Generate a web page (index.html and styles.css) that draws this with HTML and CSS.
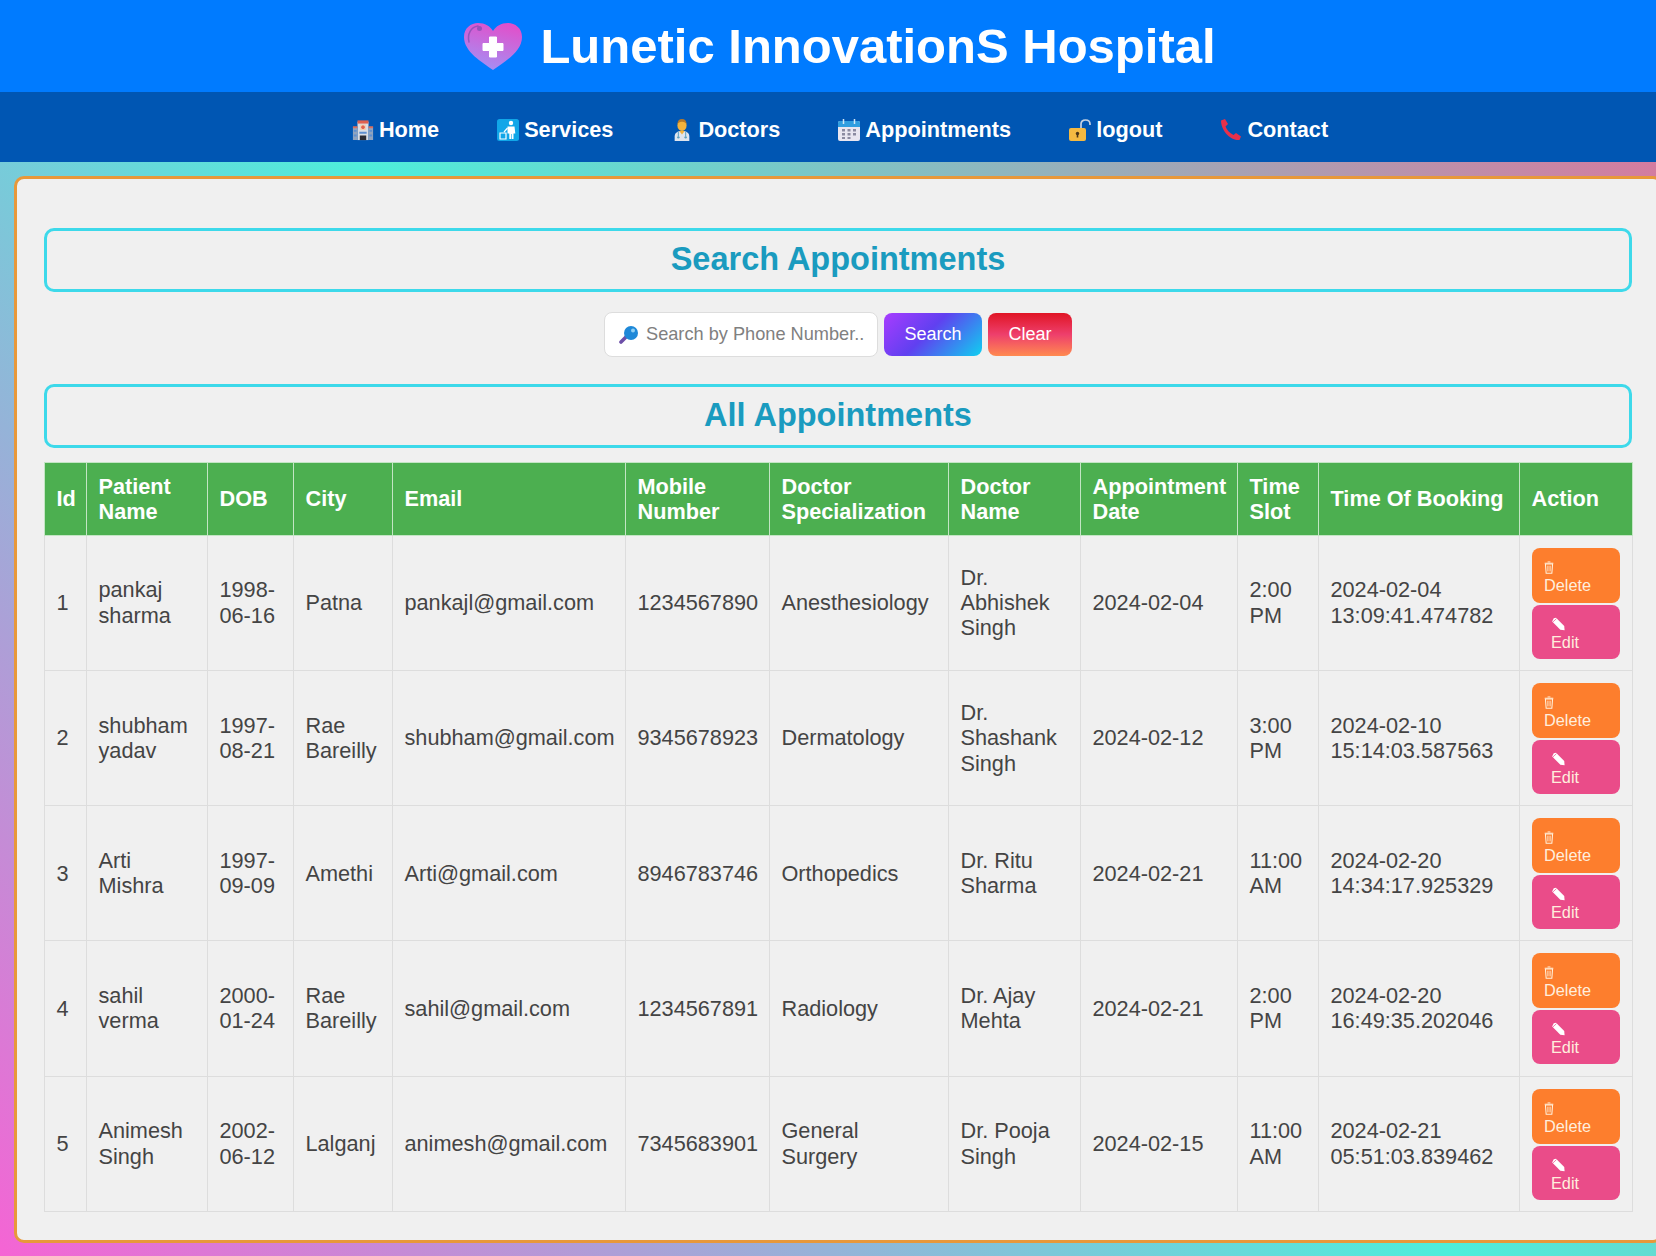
FILE: index.html
```html
<!DOCTYPE html>
<html lang="en">
<head>
    <meta charset="UTF-8">
    <meta name="viewport" content="width=device-width, initial-scale=1.0">
    <title>Lunetic InnovationS Hospital - Appointments</title>
    <link rel="stylesheet" href="styles.css">
</head>
<body>
    <!-- icons used in every table row -->
    <svg class="sprites" width="0" height="0">
        <defs>
            <symbol id="icon-trash" viewBox="0 0 14 18">
                <path d="M2 4h10l-1 13H3z" fill="none" stroke="#fff1dc" stroke-width="1.5"/>
                <path d="M1 3h12M5 1.2h4M5.5 6.5v8M8.5 6.5v8" fill="none" stroke="#fff1dc" stroke-width="1.3"/>
            </symbol>
            <symbol id="icon-pencil" viewBox="0 0 18 18">
                <path d="M3.5 1l3-.6 10.5 10.6.5 5.5-5.5-.8L1.5 5z" fill="#fff"/>
                <path d="M2.4 5.8l4.6-4.3" stroke="#ea4c89" stroke-width=".9"/>
            </symbol>
        </defs>
    </svg>

    <div class="page">
        <header class="site-header">
            <svg class="logo" viewBox="0 0 58 47">
                <defs>
                    <linearGradient id="heartFill" x1=".7" y1="0" x2=".4" y2="1">
                        <stop offset="0" stop-color="#e24fca"/>
                        <stop offset="1" stop-color="#a48ff4"/>
                    </linearGradient>
                </defs>
                <path d="M29 47C18 39 0 29 0 14 0 5 7 0 14 0c7 0 12 3 15 8 3-5 8-8 15-8 7 0 14 5 14 14 0 15-18 25-29 33z" fill="url(#heartFill)"/>
                <path d="M5 19C3 11 7 4 14 3" fill="none" stroke="#7d4bb0" stroke-opacity=".7" stroke-width="1.5" stroke-linecap="round"/>
                <circle cx="15.500" cy="5.500" r="2.500" fill="#7d4bb0" fill-opacity=".7"/>
                <path d="M25.500 14h7v6.500H39v7h-6.500V34h-7v-6.500H19v-7h6.500z" fill="#fff" stroke="#fff" stroke-width="1" stroke-linejoin="round"/>
            </svg>
            <h1>Lunetic InnovationS Hospital</h1>
        </header>

        <nav class="site-nav">
            <a href="#">
                <svg class="nav-icon" viewBox="0 0 22 24">
                    <path d="M5 3h12v20H5z" fill="#d9dde6"/>
                    <path d="M5 1.500h12V5H5z" fill="#e0604f"/>
                    <path d="M0 9h5v14H0zM17 9h5v14h-5z" fill="#8fa3bf"/>
                    <path d="M0 8h5v2H0zM17 8h5v2h-5z" fill="#d9705f"/>
                    <rect x="8" y="6" width="6" height="6" fill="#f6c9a8"/>
                    <path d="M10 7h2v4h-2zM9 8h4v2H9z" fill="#e0604f"/>
                    <path d="M7.500 18h7v5h-7z" fill="#2b2b33"/>
                    <path d="M7 14h8v2H7zM1 12h3v2H1zM1 17h3v2H1zM18 12h3v2h-3zM18 17h3v2h-3z" fill="#5f8fd0"/>
                </svg>
                Home
            </a>
            <a href="#">
                <svg class="nav-icon" viewBox="0 0 22 22">
                    <rect width="22" height="22" rx="2.500" fill="#11a6e8"/>
                    <circle cx="14" cy="4" r="2.200" fill="#fff"/>
                    <path d="M10.500 7.500h7l.8 7h-1.800V20h-1.800v-5h-.6v5h-1.800v-5.500h-1.800z" fill="#fff"/>
                    <path d="M10.500 9L7 13" stroke="#fff" stroke-width="1.200"/>
                    <path d="M3 14h6v6H3z" fill="none" stroke="#fff" stroke-width="1.200"/>
                </svg>
                Services
            </a>
            <a href="#">
                <svg class="nav-icon" viewBox="0 0 22 24">
                    <path d="M3 24v-5c0-4 3-6 8-6s8 2 8 6v5z" fill="#dfe5ee"/>
                    <path d="M8 13l3 4 3-4z" fill="#f3b23c"/>
                    <path d="M7 14v5M15 14v5" stroke="#5c9fc0" stroke-width="1.100" fill="none"/>
                    <circle cx="7" cy="20" r="1.300" fill="#5c9fc0"/>
                    <circle cx="15" cy="20" r="1.300" fill="#5c9fc0"/>
                    <ellipse cx="11" cy="7" rx="5" ry="6" fill="#f3b23c"/>
                    <path d="M6 6c0-4 2-6 5-6s5 2 5 6c-1-2-2-3-5-3S7 4 6 6z" fill="#b5782a"/>
                </svg>
                Doctors
            </a>
            <a href="#">
                <svg class="nav-icon" viewBox="0 0 22 22">
                    <rect y="2" width="22" height="20" rx="2" fill="#e9e6f0"/>
                    <path d="M0 8V4a2 2 0 0 1 2-2h18a2 2 0 0 1 2 2v4z" fill="#2f9ee0"/>
                    <path d="M5.500 0v5M16.500 0v5" stroke="#cfe6f6" stroke-width="1.500"/>
                    <path d="M4 10h3v2.500H4zM9.500 10h3v2.500h-3zM15 10h3v2.500h-3zM4 14h3v2.500H4zM9.500 14h3v2.500h-3zM15 14h3v2.500h-3zM9.500 18h3v2H9.500zM4 18h3v2H4z" fill="#8b8aa0"/>
                </svg>
                Appointments
            </a>
            <a href="#">
                <svg class="nav-icon" viewBox="0 0 22 22">
                    <path d="M12 10V5c0-2.500 2-4 4.500-4S21 2.500 21 5v1" fill="none" stroke="#c6d2e2" stroke-width="1.700"/>
                    <rect y="9" width="17" height="13" rx="2" fill="#f4b942"/>
                    <circle cx="8.500" cy="14.500" r="1.700" fill="#4a3418"/>
                    <path d="M7.700 15h1.600v3.500H7.700z" fill="#4a3418"/>
                </svg>
                logout
            </a>
            <a href="#">
                <svg class="nav-icon" viewBox="0 0 22 22">
                    <path d="M1 1.500L5 0l3 5-2.500 2.500c1 3 4 6.500 8 8.500L16 14l5 3.500-1.500 3.500C10 22 1 11 1 1.500z" fill="#e8304a"/>
                </svg>
                Contact
            </a>
        </nav>

        <main class="card">
            <h2 class="section-title">Search Appointments</h2>
            <form class="search-form">
                <div class="search-box">
                    <svg class="search-icon" viewBox="0 0 20 20">
                        <path d="M8 11L2 17" stroke="#6d4fa8" stroke-width="3.600" stroke-linecap="round"/>
                        <circle cx="12" cy="8" r="7" fill="#1e88d8"/>
                        <circle cx="14" cy="5.500" r="2" fill="#8fd0f5"/>
                    </svg>
                    <input type="text" placeholder="Search by Phone Number..">
                </div>
                <button type="button" class="btn-search">Search</button>
                <button type="button" class="btn-clear">Clear</button>
            </form>

            <h2 class="section-title">All Appointments</h2>
            <table class="appointments">
                <colgroup>
                    <col class="col-id">
                    <col class="col-name">
                    <col class="col-dob">
                    <col class="col-city">
                    <col class="col-email">
                    <col class="col-mobile">
                    <col class="col-spec">
                    <col class="col-doctor">
                    <col class="col-date">
                    <col class="col-slot">
                    <col class="col-booking">
                    <col class="col-action">
                </colgroup>
                <thead>
                    <tr>
                        <th>Id</th>
                        <th>Patient Name</th>
                        <th>DOB</th>
                        <th>City</th>
                        <th>Email</th>
                        <th>Mobile Number</th>
                        <th>Doctor Specialization</th>
                        <th>Doctor Name</th>
                        <th>Appointment Date</th>
                        <th>Time Slot</th>
                        <th>Time Of Booking</th>
                        <th>Action</th>
                    </tr>
                </thead>
                <tbody>
                    <tr>
                        <td>1</td>
                        <td>pankaj sharma</td>
                        <td>1998-06-16</td>
                        <td>Patna</td>
                        <td>pankajl@gmail.com</td>
                        <td>1234567890</td>
                        <td>Anesthesiology</td>
                        <td>Dr. Abhishek Singh</td>
                        <td>2024-02-04</td>
                        <td>2:00 PM</td>
                        <td>2024-02-04 13:09:41.474782</td>
                        <td class="actions">
                            <a href="#" class="btn-delete"><svg><use href="#icon-trash"/></svg>Delete</a>
                            <a href="#" class="btn-edit"><svg><use href="#icon-pencil"/></svg>Edit</a>
                        </td>
                    </tr>
                    <tr>
                        <td>2</td>
                        <td>shubham yadav</td>
                        <td>1997-08-21</td>
                        <td>Rae Bareilly</td>
                        <td>shubham@gmail.com</td>
                        <td>9345678923</td>
                        <td>Dermatology</td>
                        <td>Dr. Shashank Singh</td>
                        <td>2024-02-12</td>
                        <td>3:00 PM</td>
                        <td>2024-02-10 15:14:03.587563</td>
                        <td class="actions">
                            <a href="#" class="btn-delete"><svg><use href="#icon-trash"/></svg>Delete</a>
                            <a href="#" class="btn-edit"><svg><use href="#icon-pencil"/></svg>Edit</a>
                        </td>
                    </tr>
                    <tr>
                        <td>3</td>
                        <td>Arti Mishra</td>
                        <td>1997-09-09</td>
                        <td>Amethi</td>
                        <td>Arti@gmail.com</td>
                        <td>8946783746</td>
                        <td>Orthopedics</td>
                        <td>Dr. Ritu Sharma</td>
                        <td>2024-02-21</td>
                        <td>11:00 AM</td>
                        <td>2024-02-20 14:34:17.925329</td>
                        <td class="actions">
                            <a href="#" class="btn-delete"><svg><use href="#icon-trash"/></svg>Delete</a>
                            <a href="#" class="btn-edit"><svg><use href="#icon-pencil"/></svg>Edit</a>
                        </td>
                    </tr>
                    <tr>
                        <td>4</td>
                        <td>sahil verma</td>
                        <td>2000-01-24</td>
                        <td>Rae Bareilly</td>
                        <td>sahil@gmail.com</td>
                        <td>1234567891</td>
                        <td>Radiology</td>
                        <td>Dr. Ajay Mehta</td>
                        <td>2024-02-21</td>
                        <td>2:00 PM</td>
                        <td>2024-02-20 16:49:35.202046</td>
                        <td class="actions">
                            <a href="#" class="btn-delete"><svg><use href="#icon-trash"/></svg>Delete</a>
                            <a href="#" class="btn-edit"><svg><use href="#icon-pencil"/></svg>Edit</a>
                        </td>
                    </tr>
                    <tr>
                        <td>5</td>
                        <td>Animesh Singh</td>
                        <td>2002-06-12</td>
                        <td>Lalganj</td>
                        <td>animesh@gmail.com</td>
                        <td>7345683901</td>
                        <td>General Surgery</td>
                        <td>Dr. Pooja Singh</td>
                        <td>2024-02-15</td>
                        <td>11:00 AM</td>
                        <td>2024-02-21 05:51:03.839462</td>
                        <td class="actions">
                            <a href="#" class="btn-delete"><svg><use href="#icon-trash"/></svg>Delete</a>
                            <a href="#" class="btn-edit"><svg><use href="#icon-pencil"/></svg>Edit</a>
                        </td>
                    </tr>
                </tbody>
            </table>
        </main>
    </div>
</body>
</html>
```

FILE: styles.css
```css
html, body {
    margin: 0;
    padding: 0;
    height: 1256px;
    overflow: hidden;
}

body {
    font-family: "Liberation Sans", Arial, sans-serif;
    background: linear-gradient(45deg, #f564d4 0%, #4deedb 50%, #e56d98 100%);
    color: #444;
}

.sprites {
    position: absolute;
}

/* the page is a bit wider than the window, the right side gets cut off */
.page {
    width: 1680px;
}

.site-header {
    display: flex;
    justify-content: center;
    align-items: center;
    gap: 18px;
    height: 92px;
    background-color: #007bff;
}

.logo {
    width: 58px;
    height: 47px;
}

.site-header h1 {
    margin: 0;
    font-size: 49px;
    color: #fff;
}

.site-nav {
    box-sizing: border-box;
    display: flex;
    justify-content: center;
    align-items: center;
    gap: 58px;
    height: 70px;
    padding-top: 6px;
    background-color: #0056b3;
}

.site-nav a {
    display: flex;
    align-items: center;
    gap: 5px;
    font-size: 21.7px;
    font-weight: bold;
    color: #fff;
    text-decoration: none;
}

.nav-icon {
    width: 22px;
    height: 22px;
}

.card {
    box-sizing: border-box;
    width: 1649px;
    margin: 14px 0 13px 14px;
    padding: 49px 28px 28px 27px;
    background-color: #f0f0f0;
    border: 3px solid #e8983a;
    border-radius: 10px;
}

.section-title {
    box-sizing: border-box;
    height: 64px;
    margin: 0;
    border: 3px solid #3dd9ea;
    border-radius: 10px;
    font-size: 32.5px;
    line-height: 57px;
    text-align: center;
    color: #1a9bbf;
}

.search-form {
    display: flex;
    justify-content: center;
    align-items: center;
    gap: 6px;
    height: 45px;
    margin: 20px 0 27px;
}

.search-box {
    box-sizing: border-box;
    display: flex;
    align-items: center;
    width: 274px;
    height: 45px;
    padding-left: 14px;
    background-color: #fff;
    border: 1.5px solid #ddd;
    border-radius: 8px;
}

.search-icon {
    flex: none;
    width: 20px;
    height: 20px;
}

.search-box input {
    width: 230px;
    padding: 0 0 0 7px;
    border: none;
    outline: none;
    background: none;
    font-family: inherit;
    font-size: 18.2px;
}

.search-box input::placeholder {
    color: #808080;
}

.search-form button {
    height: 43px;
    border: none;
    border-radius: 8px;
    font-family: inherit;
    font-size: 18px;
    color: #fff;
    cursor: pointer;
}

.btn-search {
    width: 98px;
    background: linear-gradient(135deg, #a83cff 0%, #6040f0 45%, #0fd0f0 100%);
}

.btn-clear {
    width: 84px;
    background: linear-gradient(180deg, #e01525 0%, #ee3f6c 50%, #ff8a50 100%);
}

.appointments {
    width: 1588px;
    margin-top: 14px;
    border-collapse: collapse;
    table-layout: fixed;
    font-size: 21.7px;
    line-height: 25.3px;
}

.col-id { width: 42px; }
.col-name { width: 121px; }
.col-dob { width: 86px; }
.col-city { width: 99px; }
.col-email { width: 233px; }
.col-mobile { width: 144px; }
.col-spec { width: 179px; }
.col-doctor { width: 132px; }
.col-date { width: 157px; }
.col-slot { width: 81px; }
.col-booking { width: 201px; }
.col-action { width: 113px; }

.appointments th,
.appointments td {
    padding: 11px 11.5px;
    text-align: left;
}

.appointments th {
    padding-top: 10.5px;
    padding-bottom: 10.5px;
    background-color: #4caf50;
    border: 1px solid #c3e5c4;
    color: #fff;
}

.appointments td {
    border: 1px solid #ddd;
}

.appointments td.actions {
    padding: 12px 12px 11.25px;
}

.actions a {
    box-sizing: border-box;
    display: flex;
    flex-direction: column;
    align-items: flex-start;
    border-radius: 8px;
    font-size: 16.3px;
    line-height: 19px;
    color: #ffeedd;
    text-decoration: none;
}

.actions svg {
    width: 10px;
    height: 15px;
    margin-bottom: 1px;
}

.btn-delete {
    height: 55px;
    margin-bottom: 2px;
    padding: 12px 0 0 12px;
    background-color: #fd7e2d;
}

.btn-edit {
    height: 54px;
    padding: 12px 0 0 19px;
    background-color: #ea4c89;
}

.btn-edit svg {
    width: 14px;
}
```
